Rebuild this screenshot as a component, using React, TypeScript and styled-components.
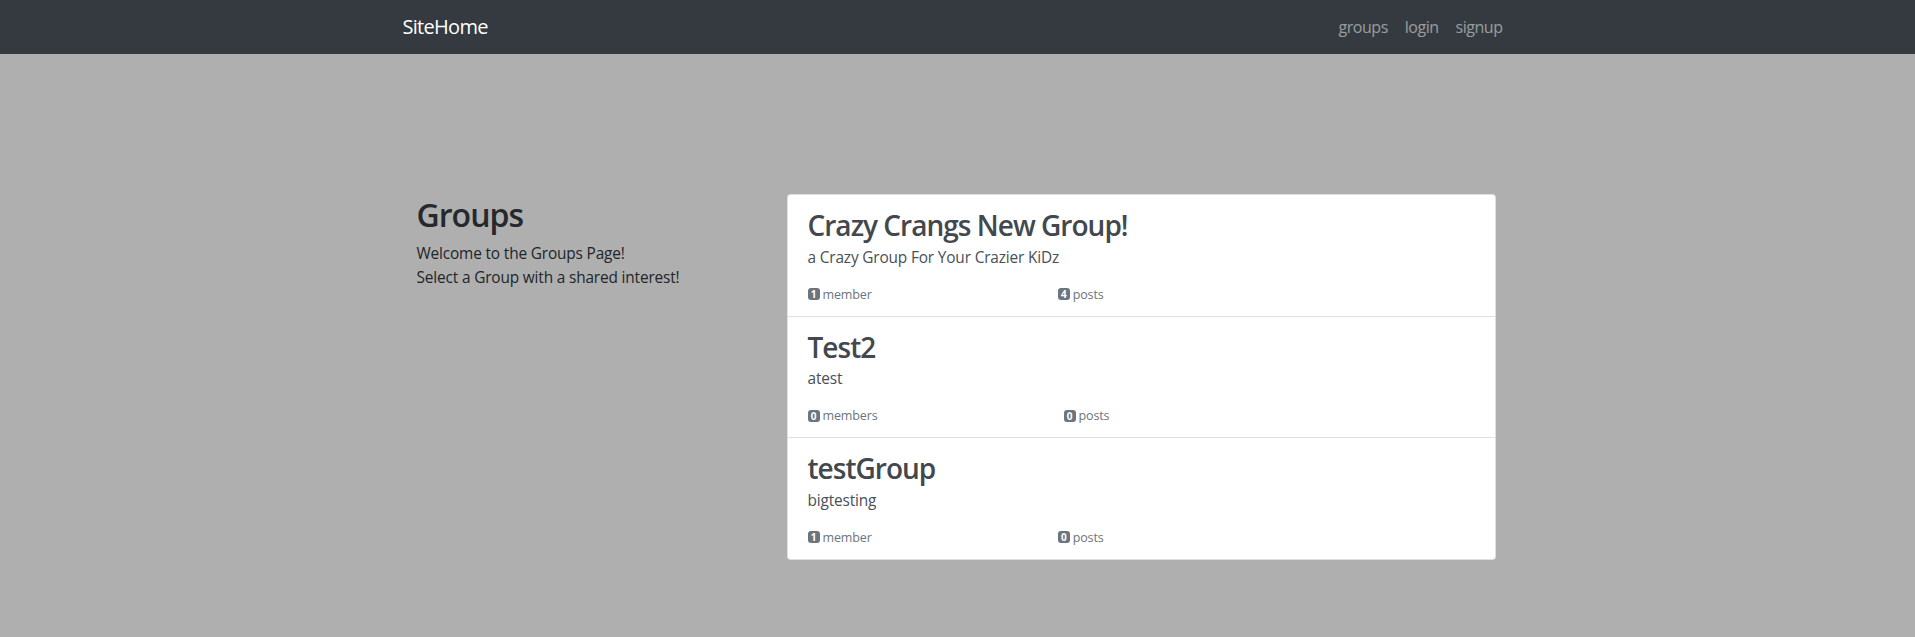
import React from "react";
import styled, { createGlobalStyle } from "styled-components";

const GlobalStyle = createGlobalStyle`
  html, body {
    margin: 0;
    padding: 0;
  }
  body {
    background: #afafaf;
    font-family: "Open Sans", "Noto Sans", "Liberation Sans", sans-serif;
    font-size: 16px;
    line-height: 1.5;
    color: #212529;
    min-height: 637px;
  }
  * { box-sizing: border-box; }
`;

const NavBar = styled.nav`
  background: #343a40;
  height: 54px;
`;

const Container = styled.div`
  max-width: 1140px;
  margin: 0 auto;
  padding: 0 15px;
`;

const NavInner = styled(Container)`
  height: 100%;
  display: flex;
  align-items: center;
  justify-content: space-between;
`;

const Brand = styled.a`
  color: #fff;
  font-size: 20px;
  line-height: 30px;
  letter-spacing: -0.035em;
  text-decoration: none;
`;

const NavLinks = styled.div`
  display: flex;
  padding-right: 10px;
`;

const NavLink = styled.a`
  color: rgba(255, 255, 255, 0.5);
  font-size: 16px;
  line-height: 24px;
  padding: 0 8.5px;
  letter-spacing: -0.03em;
  text-decoration: none;
  &:last-child {
    padding-right: 0;
  }
`;

const Main = styled(Container)`
  padding-top: 140px;
`;

const Row = styled.div`
  display: grid;
  grid-template-columns: 384px 709px;
  align-items: start;
`;

const Intro = styled.div`
  padding-left: 14px;
`;

const Heading = styled.h2`
  font-size: 32px;
  line-height: 1.2;
  font-weight: 600;
  margin: 2px 0 8px;
  letter-spacing: -0.03em;
  color: #25292d;
`;

const IntroText = styled.p`
  margin: 0;
  font-size: 15.4px;
  line-height: 24px;
  letter-spacing: -0.01em;
  color: #212529;
`;

const Card = styled.div`
  background: #fff;
  border: 1px solid rgba(0, 0, 0, 0.125);
  border-radius: 4px;
  overflow: hidden;
`;

const Item = styled.a`
  display: block;
  padding: 14px 20px 12px;
  text-decoration: none;
  & + & {
    border-top: 1px solid rgba(0, 0, 0, 0.125);
  }
`;

const Title = styled.h3`
  font-size: 28px;
  line-height: 1.2;
  font-weight: 600;
  margin: 0 0 3px;
  letter-spacing: -0.035em;
  color: #42484e;
`;

const Subtitle = styled.p`
  margin: 0 0 15px;
  font-size: 15.4px;
  line-height: 24px;
  letter-spacing: -0.01em;
  color: #495057;
`;

const Stats = styled.div`
  display: flex;
  gap: 186px;
  font-size: 12.5px;
  line-height: 19px;
  color: #6c757d;
  letter-spacing: -0.01em;
`;

const Stat = styled.span`
  display: inline-flex;
  align-items: center;
  gap: 3px;
`;

const Badge = styled.span`
  display: inline-block;
  background: #6c757d;
  color: #fff;
  font-size: 10px;
  font-weight: 700;
  line-height: 1;
  padding: 1px 3px;
  border-radius: 3px;
  min-width: 12px;
  text-align: center;
`;

const groups = [
  { name: "Crazy Crangs New Group!", desc: "a Crazy Group For Your Crazier KiDz", members: 1, posts: 4 },
  { name: "Test2", desc: "atest", members: 0, posts: 0 },
  { name: "testGroup", desc: "bigtesting", members: 1, posts: 0 },
];

export default function App() {
  return (
    <>
      <GlobalStyle />
      <NavBar>
        <NavInner>
          <Brand href="#">SiteHome</Brand>
          <NavLinks>
            <NavLink href="#">groups</NavLink>
            <NavLink href="#">login</NavLink>
            <NavLink href="#">signup</NavLink>
          </NavLinks>
        </NavInner>
      </NavBar>
      <Main>
        <Row>
          <Intro>
            <Heading>Groups</Heading>
            <IntroText>Welcome to the Groups Page!</IntroText>
            <IntroText>Select a Group with a shared interest!</IntroText>
          </Intro>
          <Card>
            {groups.map((g) => (
              <Item href="#" key={g.name}>
                <Title>{g.name}</Title>
                <Subtitle>{g.desc}</Subtitle>
                <Stats>
                  <Stat>
                    <Badge>{g.members}</Badge>
                    {g.members === 1 ? "member" : "members"}
                  </Stat>
                  <Stat>
                    <Badge>{g.posts}</Badge>
                    posts
                  </Stat>
                </Stats>
              </Item>
            ))}
          </Card>
        </Row>
      </Main>
    </>
  );
}
